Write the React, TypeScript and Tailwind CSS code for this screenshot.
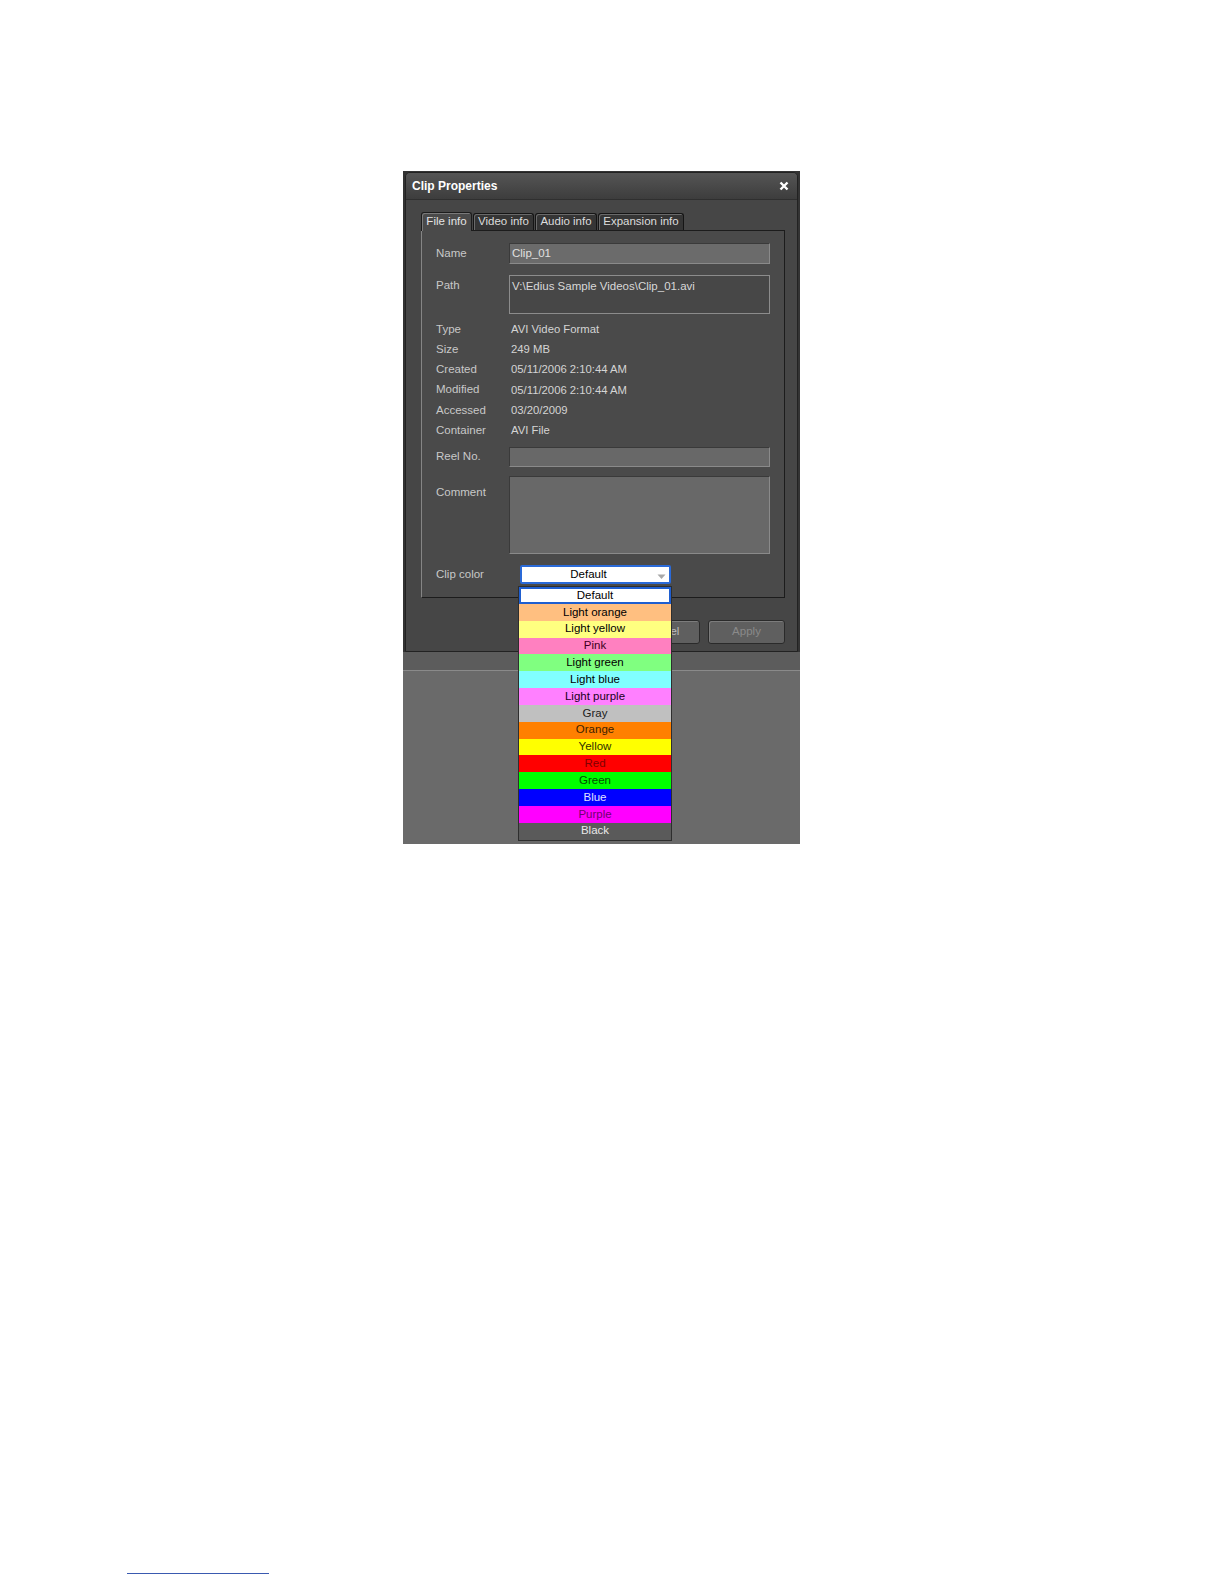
const infoRows = [
  { label: "Type", value: "AVI Video Format" },
  { label: "Size", value: "249 MB" },
  { label: "Created", value: "05/11/2006 2:10:44 AM" },
  { label: "Modified", value: "05/11/2006 2:10:44 AM" },
  { label: "Accessed", value: "03/20/2009" },
  { label: "Container", value: "AVI File" },
];

const tabs = [
  { label: "File info", w: "w-[51px]", active: true },
  { label: "Video info", w: "w-[61px]", active: false },
  { label: "Audio info", w: "w-[62px]", active: false },
  { label: "Expansion info", w: "w-[86px]", active: false },
];

const colors = [
  { label: "Default", cls: "bg-white text-black border-2 border-[#1f5fd0]" },
  { label: "Light orange", cls: "bg-[#ffbf80] text-black" },
  { label: "Light yellow", cls: "bg-[#ffff80] text-black" },
  { label: "Pink", cls: "bg-[#ff80c0] text-[#400020]" },
  { label: "Light green", cls: "bg-[#80ff80] text-black" },
  { label: "Light blue", cls: "bg-[#80ffff] text-black" },
  { label: "Light purple", cls: "bg-[#ff80ff] text-[#200020]" },
  { label: "Gray", cls: "bg-[#c0c0c0] text-[#202020]" },
  { label: "Orange", cls: "bg-[#ff8000] text-[#402000]" },
  { label: "Yellow", cls: "bg-[#ffff00] text-[#303000]" },
  { label: "Red", cls: "bg-[#ff0000] text-[#800000]" },
  { label: "Green", cls: "bg-[#00ff00] text-[#005000]" },
  { label: "Blue", cls: "bg-[#0000ff] text-[#e0e0ff]" },
  { label: "Purple", cls: "bg-[#ff00ff] text-[#700070]" },
  { label: "Black", cls: "bg-[#5a5a5a] text-[#e8e8e8]" },
];

const Label = ({ children, className = "" }: { children: React.ReactNode; className?: string }) => (
  <div className={`w-[73px] shrink-0 text-[11.5px] text-[#c8c8c8] ${className}`}>{children}</div>
);

export default function App() {
  return (
    <div className="h-[1584px] bg-white font-['Liberation_Sans',Arial,sans-serif]">
      <div className="pt-[171px] pl-[403px]">
        <div className="relative w-[397px] h-[673px] flex flex-col bg-[#6a6a6a]">
          {/* dialog */}
          <div className="bg-[#333] px-[2px] pt-px">
            <div className="h-[480px] flex flex-col bg-[#464646] border border-[#222] rounded-t-[5px] overflow-hidden">
              <div className="h-[27px] shrink-0 flex items-center justify-between pl-[6px] pr-[8px] bg-gradient-to-b from-[#555] to-[#3d3d3d] border-b border-[#2f2f2f]">
                <span className="text-[12px] font-bold text-white">Clip Properties</span>
                <svg width="10" height="10" viewBox="0 0 10 10">
                  <path d="M1.5 1.5 L8.5 8.5 M8.5 1.5 L1.5 8.5" stroke="#fff" strokeWidth="2.4" />
                </svg>
              </div>

              <div className="flex flex-col pl-[15px] pr-[12px] pt-[12px]">
                {/* tabs */}
                <div className="flex items-end gap-[1px] h-[18px]">
                  {tabs.map((t) =>
                    t.active ? (
                      <div
                        key={t.label}
                        className={`${t.w} h-[19px] -mb-px z-10 flex items-center justify-center rounded-t-[3px] border border-b-0 border-[#1c1c1c] bg-[#4a4a4a] text-[11.5px] text-[#e4e4e4] shadow-[inset_1px_1px_0_#7a7a7a]`}
                      >
                        {t.label}
                      </div>
                    ) : (
                      <div
                        key={t.label}
                        className={`${t.w} h-[17px] flex items-center justify-center rounded-t-[3px] border border-b-0 border-[#151515] bg-[#353535] text-[11.5px] text-[#dcdcdc] shadow-[inset_1px_1px_0_#6a6a6a]`}
                      >
                        {t.label}
                      </div>
                    )
                  )}
                </div>

                {/* panel */}
                <div className="h-[368px] flex flex-col border border-[#1c1c1c] border-l-[#858585] bg-[#4a4a4a] pt-[12px] pl-[14px] pr-[14px]">
                  <div className="flex items-center h-[21px]">
                    <Label>Name</Label>
                    <div className="flex-1 h-[21px] flex items-center pl-[2px] bg-[#6b6b6b] border border-[#3a3a3a] border-b-[#8a8a8a] border-r-[#8a8a8a] text-[11.5px] text-[#e0e0e0]">
                      Clip_01
                    </div>
                  </div>

                  <div className="flex items-start mt-[11px]">
                    <Label className="pt-[2px]">Path</Label>
                    <div className="flex-1 h-[39px] pl-[2px] pt-[2px] bg-[#474747] border border-[#8c8c8c] text-[11.5px] text-[#d8d8d8]">
                      V:\Edius Sample Videos\Clip_01.avi
                    </div>
                  </div>

                  <div className="flex flex-col mt-[5px]">
                    {infoRows.map((r) => (
                      <div key={r.label} className="flex items-center h-[20.3px]">
                        <Label>{r.label}</Label>
                        <span className="pl-[2px] text-[11.3px] text-[#d4d4d4]">{r.value}</span>
                      </div>
                    ))}
                  </div>

                  <div className="flex items-start mt-[6px]">
                    <Label className="pt-px">Reel No.</Label>
                    <div className="flex-1 h-[20px] bg-[#686868] border border-[#3a3a3a] border-b-[#8a8a8a] border-r-[#8a8a8a]" />
                  </div>

                  <div className="flex items-start mt-[9px]">
                    <Label className="pt-[8px]">Comment</Label>
                    <div className="flex-1 h-[78px] bg-[#686868] border border-[#3a3a3a] border-b-[#8a8a8a] border-r-[#8a8a8a]" />
                  </div>

                  <div className="flex items-center mt-[11px] h-[19px]">
                    <Label>Clip color</Label>
                    <div className="ml-[11px] w-[151px] h-[19px] relative flex items-center justify-center bg-white border-2 border-[#2a6ad8] rounded-[2px] text-[11.5px] text-black">
                      <span className="-ml-[14px]">Default</span>
                      <svg className="absolute right-[3px] top-[7px]" width="9" height="6" viewBox="0 0 9 6">
                        <path d="M0.5 0.5 H8.5 L4.5 5 Z" fill="#a8a8a8" />
                      </svg>
                    </div>
                  </div>
                </div>

                {/* buttons */}
                <div className="flex justify-end gap-[8px] mt-[22px]">
                  <div className="w-[77px] h-[24px] flex items-center justify-center rounded-[3px] bg-[#5f5f5f] border border-[#2a2a2a] shadow-[inset_1px_1px_0_#7c7c7c] text-[11.5px] text-[#bdbdbd]">
                    Cancel
                  </div>
                  <div className="w-[77px] h-[24px] flex items-center justify-center rounded-[3px] bg-[#5f5f5f] border border-[#2a2a2a] shadow-[inset_1px_1px_0_#7c7c7c] text-[11.5px] text-[#8a8a8a]">
                    Apply
                  </div>
                </div>
              </div>
            </div>
          </div>

          {/* area under the dialog */}
          <div className="h-[18px] bg-[#5c5c5c]" />
          <div className="h-px bg-[#8a8a8a]" />
          <div className="flex-1 bg-[#6a6a6a]" />

          {/* open colour list */}
          <div className="absolute left-[115px] top-[415px] w-[154px] flex flex-col border border-[#2e2e2e] bg-[#2e2e2e]">
            {colors.map((c) => (
              <div
                key={c.label}
                className={`h-[16.85px] flex items-center justify-center text-[11.5px] leading-none ${c.cls}`}
              >
                {c.label}
              </div>
            ))}
          </div>
        </div>
      </div>

      <div className="mt-[729px] ml-[127px] w-[142px] h-px bg-[#3a5ab0]" />
    </div>
  );
}
